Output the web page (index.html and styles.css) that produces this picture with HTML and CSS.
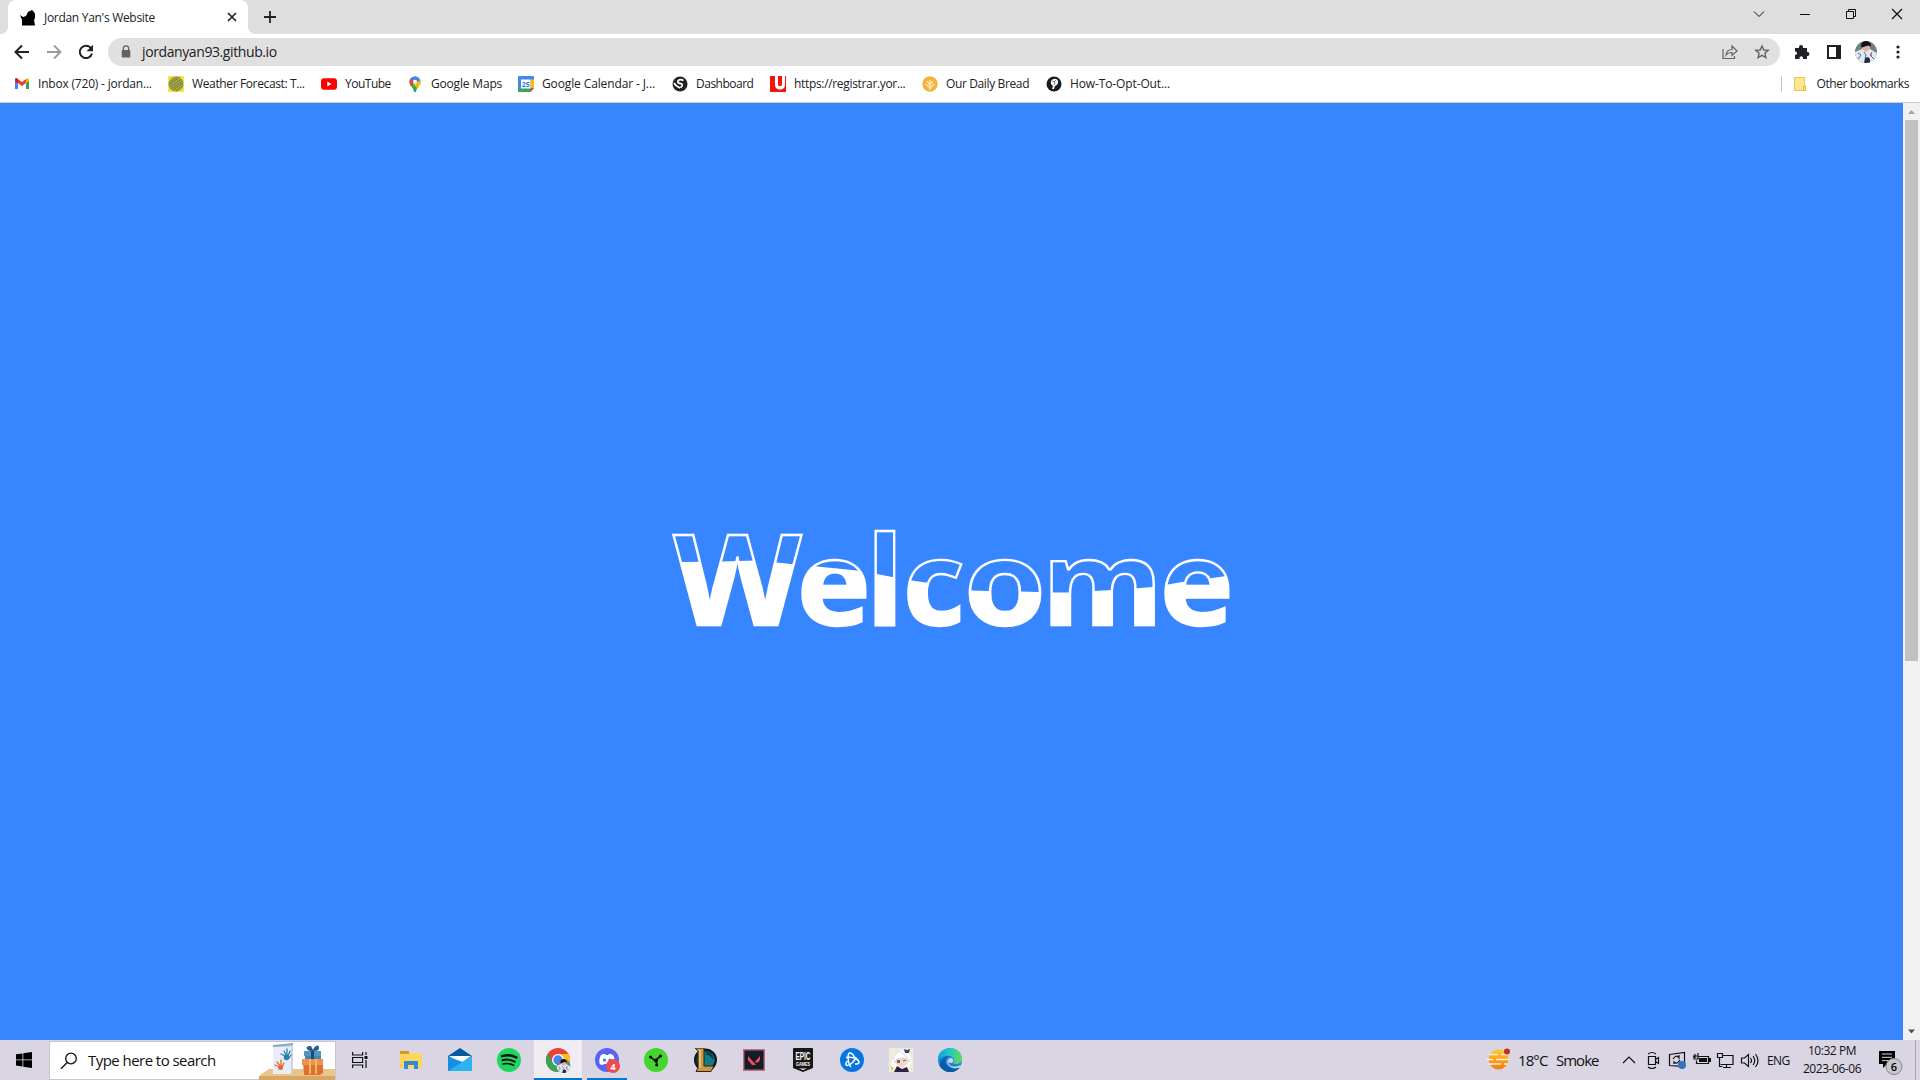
FILE: index.html
```html
<!DOCTYPE html>
<html lang="en">
<head>
<meta charset="utf-8">
<title>Jordan Yan's Website</title>
<link rel="stylesheet" href="styles.css">
</head>
<body>
<header class="browser">
  <div class="tabstrip">
    <div class="tab">
      <svg class="favicon" width="16" height="16" viewBox="0 0 16 16"><path d="M2 15.500V10L0 5l3 2 3-1 2-4 4-2 2 2 1 2v4l-1 2 1 5.500z"/></svg>
      <span class="tab-title">Jordan Yan's Website</span>
      <svg class="tab-close" width="10" height="10" viewBox="0 0 10 10"><path d="M1 1l8 8M9 1l-8 8" stroke="#222" stroke-width="1.700"/></svg>
    </div>
    <svg class="new-tab" width="12" height="12" viewBox="0 0 12 12"><path d="M6 0v12M0 6h12" stroke="#222" stroke-width="1.800"/></svg>
    <div class="window-controls">
      <svg width="46" height="28" viewBox="0 0 46 28"><path d="M18 11.500l5 5 5-5"/></svg>
      <svg width="46" height="28" viewBox="0 0 46 28"><path d="M18 14.500h10"/></svg>
      <svg width="46" height="28" viewBox="0 0 46 28"><path d="M18.500 11.500h7v7h-7zM20.500 11.500v-2h7v7h-2"/></svg>
      <svg width="46" height="28" viewBox="0 0 46 28"><path d="M18 9l10 10M28 9L18 19" stroke-width="1.300"/></svg>
    </div>
  </div>
  <div class="toolbar">
    <div class="nav">
      <svg width="16" height="16" viewBox="0 0 16 16"><path d="M15 8H2M8 1.500L1.500 8 8 14.500" fill="none" stroke="#202124" stroke-width="2"/></svg>
      <svg width="16" height="16" viewBox="0 0 16 16"><path d="M1 8h13M8 1.500L14.500 8 8 14.500" fill="none" stroke="#9a9a9b" stroke-width="1.800"/></svg>
      <svg width="16" height="16" viewBox="0 0 16 16"><path d="M13 4.200A6.200 6.200 0 1 0 14 9.500" fill="none" stroke="#202124" stroke-width="2"/><path d="M15 .8v6.400H8.600z" fill="#202124"/></svg>
    </div>
    <div class="omnibox">
      <svg width="10" height="14" viewBox="0 0 10 14"><path d="M2.300 6V3.500a2.700 2.700 0 0 1 5.400 0V6" fill="none" stroke="#5f6368" stroke-width="1.300"/><rect x=".7" y="5" width="8.600" height="7.500" rx="1" fill="#5f6368"/></svg>
      <span class="url">jordanyan93.github.io</span>
      <svg class="share" width="16" height="16" viewBox="0 0 16 16"><path d="M1 5v9.500h11.500V12M4 11c.5-4 3-5.500 6-5.500V2l5 5-5 4.500V8.500c-3 0-4.500.5-6 2.500z" fill="none" stroke="#5f6368" stroke-width="1.200"/></svg>
      <svg width="16" height="16" viewBox="0 0 16 16"><path d="M8 2l1.800 4 4.400.4-3.300 2.900 1 4.300L8 11.300l-3.900 2.300 1-4.300L1.800 6.400 6.200 6z" fill="none" stroke="#5f6368" stroke-width="1.400"/></svg>
    </div>
    <div class="actions">
      <svg width="16" height="16" viewBox="0 0 16 16"><path d="M1 4h4V3a2 2 0 0 1 4 0v1h4v4h.5a2 2 0 0 1 0 4H13v3H9v-1a1.700 1.700 0 0 0-3.500 0v1H1v-4h.6a1.800 1.800 0 0 0 0-3.500H1z" fill="#202124"/></svg>
      <svg width="16" height="16" viewBox="0 0 16 16"><path d="M1 1h14v14H1zM3 3v10h7V3z" fill="#202124" fill-rule="evenodd"/></svg>
      <svg class="avatar" width="22" height="22" viewBox="0 0 22 22"><use href="#person"/></svg>
      <svg width="16" height="16" viewBox="0 0 16 16" fill="#202124"><circle cx="8" cy="3" r="1.600"/><circle cx="8" cy="8" r="1.600"/><circle cx="8" cy="13" r="1.600"/></svg>
    </div>
  </div>
  <nav class="bookmarks">
    <div class="bm w1"><svg width="16" height="16" viewBox="0 0 16 16"><path d="M1 3.500V13h3V7z" fill="#4285f4"/><path d="M12 7v6h3V3.500z" fill="#34a853"/><path d="M1 3.500C1 2 3 1.800 4 3l4 3 4-3v4l-4 3-7-5z" fill="#ea4335"/><path d="M12 3c1-1.200 3-1 3 .5V5l-3 2.500z" fill="#fbbc04"/><path d="M1 3.500V5l3 2.500V3C3 1.800 1 2 1 3.500z" fill="#c5221f"/></svg><span>Inbox (720) - jordan...</span></div>
    <div class="bm w2"><svg width="16" height="16" viewBox="0 0 16 16"><rect width="16" height="16" rx="1" fill="#f2e14b"/><circle cx="8" cy="8" r="7.500" fill="#a9a940"/><path d="M1 7l8-6M1 9l11-8M2 11L14 3M3 13L15 5M5 14l10-7M8 15l7-5" stroke="#586d47" stroke-width=".9" stroke-dasharray="1.500 .6"/></svg><span>Weather Forecast: T...</span></div>
    <div class="bm w3"><svg width="16" height="16" viewBox="0 0 16 16"><rect y="2.200" width="16" height="11.600" rx="3" fill="#f00"/><path d="M6.300 5.500v5L10.500 8z" fill="#fff"/></svg><span>YouTube</span></div>
    <div class="bm w4"><svg width="16" height="16" viewBox="0 0 16 16"><path d="M2.500 6a5.500 5.500 0 0 1 11 0c0 4-4 5-4.500 10H7C6.500 11 2.500 10 2.500 6z" fill="#34a853"/><path d="M8 6l5.300-1.500C14.500 8 12 10 10 12L6 8z" fill="#fbbc04"/><path d="M2.500 6c0-1 .3-2.500 1.300-3.700L8 6l-4.200 4.200C3 9 2.500 7.500 2.500 6z" fill="#ea4335"/><path d="M3.800 2.300A5.500 5.500 0 0 1 13 4L8 8z" fill="#4285f4"/><circle cx="8" cy="5.800" r="2" fill="#fff"/></svg><span>Google Maps</span></div>
    <div class="bm w5"><svg width="16" height="16" viewBox="0 0 16 16"><path d="M0 1Q0 0 1 0h14q1 0 1 1v11l-4 4H1q-1 0-1-1z" fill="#4285f4"/><path d="M12.500 3.500H16V12h-3.500z" fill="#fbbc04"/><path d="M0 12.500h12.500V16H1q-1 0-1-1z" fill="#34a853"/><path d="M12.500 12.500H16L12.500 16z" fill="#ea4335"/><path d="M3 3.500h9.500v9H3z" fill="#fff"/><text x="7.700" y="11" class="cal-day">25</text></svg><span>Google Calendar - J...</span></div>
    <div class="bm w6"><svg width="16" height="16" viewBox="0 0 16 16"><circle cx="8" cy="8" r="7.500" fill="#222"/><path d="M11.500 4.500C7 2 4 6 7 7.200c4 .8 4.500 1.800 1.500 4.500M2 7c1.500 3 4 3.800 6 5" fill="none" stroke="#fff" stroke-width="1.700"/></svg><span>Dashboard</span></div>
    <div class="bm w7"><svg width="16" height="16" viewBox="0 0 16 16"><path d="M0 0h16v16H0z" fill="#f4140c"/><path d="M5 0h3v8c0 3 4 3 4 0V0h3v9c0 6-10 6-10 0z" fill="#fff"/></svg><span>https://registrar.yor...</span></div>
    <div class="bm w8"><svg width="16" height="16" viewBox="0 0 16 16"><circle cx="8" cy="8" r="7.700" fill="#f7b13c"/><path d="M8 14V4M8 9L5 5M8 9l3-4M8 12L3.500 8M8 12l4.500-4" fill="none" stroke="#ffe9bd" stroke-width="1.300"/></svg><span>Our Daily Bread</span></div>
    <div class="bm w9"><svg width="16" height="16" viewBox="0 0 16 16"><circle cx="8" cy="8" r="7.500" fill="#171b1d"/><path d="M5 5c2-3 6-3 7 0 .5 3-1 4-3 5l-1 3H6l1-3C5 9 4.500 7 5 5z" fill="#fff"/><path d="M6 5l3 1-1 3M8 6l2-2" stroke="#444" stroke-width=".7" fill="none"/></svg><span>How-To-Opt-Out...</span></div>
    <div class="other"><svg width="14" height="16" viewBox="0 0 14 16"><path d="M1.500 1.500h10V10h1.200v4.500H1.500z" fill="#ffe694" stroke="#ebc744"/><path d="M10.500 14.500v-4h2v4z" fill="#ffe694" stroke="#e5bd2b"/></svg><span>Other bookmarks</span></div>
  </nav>
</header>

<main class="viewport">
  <section class="hero">
    <svg class="welcome" width="580" height="130" viewBox="660 510 580 130">
      <defs>
        <pattern id="wave" patternUnits="userSpaceOnUse" x="660" y="500" width="600" height="150" viewBox="660 500 600 150"><path d="M660 562.500L682 562l41-.5 33-1 20.500 2L791 564l26 2.500 40 4 20 3.500 17.500 3.500L912 580.500l17 2.500 42.500 7.500 16.500.5 33 .5 32 1h17.500L1094 591l18-1 23-1.500 17-1.500 16-2.500 17-3 24-3 14-2 17-2.500h20V650H660z" fill="#fff"/></pattern>
      </defs>
      <text class="word" y="625"><tspan class="cap" x="673.500" textLength="128" lengthAdjust="spacingAndGlyphs">W</tspan><tspan x="797" textLength="73.500" lengthAdjust="spacingAndGlyphs">e</tspan><tspan class="tall" x="866">l</tspan><tspan x="903" textLength="62" lengthAdjust="spacingAndGlyphs">c</tspan><tspan x="964" textLength="82" lengthAdjust="spacingAndGlyphs">o</tspan><tspan x="1042" textLength="121" lengthAdjust="spacingAndGlyphs">m</tspan><tspan x="1160" textLength="73.500" lengthAdjust="spacingAndGlyphs">e</tspan></text>
    </svg>
  </section>
  <div class="scrollbar">
    <svg width="17" height="17" viewBox="0 0 17 17"><path d="M5 11l3.500-4 3.500 4z" fill="#a3a3a3"/></svg>
    <div class="thumb"></div>
    <svg class="down" width="17" height="17" viewBox="0 0 17 17"><path d="M5 6.500h7l-3.500 4z" fill="#505050"/></svg>
  </div>
</main>

<footer class="taskbar">
  <div class="start"><svg width="16" height="16" viewBox="0 0 16 16"><path d="M0 2.300l6.500-.9v6.100H0zM7.300 1.300L16 0v7.500H7.300zM0 8.300h6.500v6.100L0 13.600zM7.300 8.300H16V16l-8.700-1.300z"/></svg></div>
  <div class="search">
    <svg width="18" height="18" viewBox="0 0 18 18"><circle cx="11" cy="6.500" r="5.300" fill="none" stroke="#111" stroke-width="1.300"/><path d="M7.200 10.500L1 16.700" stroke="#111" stroke-width="1.400"/></svg>
    <span>Type here to search</span>
    <svg class="gifts" width="76" height="38" viewBox="0 0 76 38">
      <path d="M0 34l10-7h66v7z" fill="#e8c58b"/><path d="M0 34h76v4H0z" fill="#d9a663"/>
      <path d="M14 4l20-2v29H14z" fill="#c9d3e5"/><path d="M14 5h18v27H14z" fill="#e8edf8"/><path d="M14 3l20-2v2l-20 2z" fill="#8ba8b8"/>
      <g fill="none" stroke-linecap="round" stroke-width="1.300"><path d="M26 14l-4-2m5 1l-2-4m3 4V7m1 7l2-5m-1 7l2-3" stroke="#2485ad"/><path d="M20 25l-4-2m5 1l-3-4m4 4v-6m1 7l2-4" stroke="#e36a31"/></g><circle cx="27.500" cy="15.500" r="2.800" fill="#2485ad"/><circle cx="21.500" cy="25.500" r="2.500" fill="#e36a31"/>
      <path d="M46 14h16v10H46z" fill="#4086ad"/><path d="M45 9h17v5H45z" fill="#5198bd"/><path d="M52 8h3v12h-3z" fill="#174d77"/><path d="M53 9c-7 0-7-6-1-5l2 4c2-5 6-6 6-2 0 3-3 3-7 3z" fill="#285f91"/>
      <path d="M44 20h20v11l-3 2H45z" fill="#db7132"/><path d="M43 17h21v6H43z" fill="#ed914c"/><path d="M50 17h2v15h-2zm6 0h2v15h-2z" fill="#f7b557"/>
    </svg>
  </div>
  <div class="apps">
    <div class="app taskview"><svg width="16" height="16" viewBox="0 0 16 16" fill="none" stroke="#111" stroke-width="1.200"><path d="M.6 0v3h10V0M.6 16v-3h10v3M.6 5.500h10v5H.6zM14 0v3M14 8v8"/><path d="M12.500 4h3v3h-3z" fill="#111" stroke="none"/></svg></div>
    <div class="app"><svg width="24" height="24" viewBox="0 0 24 24"><path d="M1 4q0-1 1-1h7l2 2h11q1 0 1 1v13q0 1-1 1H1z" fill="#ffd45f"/><path d="M1 3h9v3H1z" fill="#dc9a14"/><path d="M5 14q0-1 1-1h12q1 0 1 1v7h-4v-4H9v4H5z" fill="#318ad5"/></svg></div>
    <div class="app"><svg width="26" height="26" viewBox="0 0 26 26"><path d="M1 9l12-8 12 8v15H1z" fill="#0759a6"/><path d="M2 9h22L13 17z" fill="#fff"/><path d="M1 9.500l16 6L1 24z" fill="#168fe0"/><path d="M1 24L25 9v15z" fill="#2cb4f2"/></svg></div>
    <div class="app"><svg width="24" height="24" viewBox="0 0 24 24"><circle cx="12" cy="12" r="12" fill="#1ed760"/><g fill="none" stroke="#111" stroke-linecap="round"><path d="M5 8.200c5-1.500 10-1 14.500 1.300" stroke-width="2.400"/><path d="M5.500 12.300c4-1.200 8.500-.7 12.300 1.400" stroke-width="2"/><path d="M6 16c4-1 7.300-.5 10.500 1.300" stroke-width="1.700"/></g></svg></div>
    <div class="app active"><svg width="26" height="26" viewBox="0 0 26 26"><circle cx="13" cy="13" r="12" fill="#ea4335"/><path d="M2.500 7A12 12 0 0 0 13 25l5-9H8z" fill="#34a853"/><path d="M13 7h10.500A12 12 0 0 1 13 25l5.500-9z" fill="#fbc116"/><circle cx="13" cy="13" r="6" fill="#fff"/><circle cx="13" cy="13" r="4.700" fill="#4285f4"/><g transform="translate(11.500 12) scale(.64)"><use href="#person"/></g></svg></div>
    <div class="app running"><svg width="26" height="26" viewBox="0 0 26 26"><circle cx="13" cy="13" r="12" fill="#5865f2"/><path d="M7 8c2-1.500 4-1 4-1l1 1h2l1-1s2-.5 4 1c2 3 2 8 1 9-2 2-4 0-4 0h-6s-2 2-4 0c-1-1-1-6 1-9z" fill="#fff"/><circle cx="10.500" cy="13" r="1.600" fill="#5865f2"/><circle cx="16" cy="13" r="1.600" fill="#5865f2"/><circle cx="19" cy="19" r="7" fill="#ee4a4f"/><text x="19" y="22.500" class="count">4</text></svg></div>
    <div class="app"><svg width="24" height="24" viewBox="0 0 24 24"><circle cx="12" cy="12" r="12" fill="#44d62c"/><path d="M11.500 13L6 8.500M11.500 12.500l5.500-5M12 12l1 5" stroke="#132b14" stroke-width="1.800"/><circle cx="6.500" cy="9" r="1.500"/><circle cx="16.500" cy="8" r="1.500"/><circle cx="12.700" cy="17" r="1.500"/><circle cx="12" cy="12.500" r="2"/></svg></div>
    <div class="app"><svg width="24" height="24" viewBox="0 0 24 24"><circle cx="12.500" cy="12" r="10.500" fill="#0c303a" stroke="#111a20" stroke-width="2"/><circle cx="13" cy="12" r="8.500" fill="#117d87"/><path d="M13 4c5 0 8 4 7 8-2-4-4-5-7-5z" fill="#093c47"/><path d="M2 0h9v18h10l-3 5.500H3L5 20V3z" fill="#c79743" stroke="#30240f"/><path d="M7 2v18" stroke="#edcc76" stroke-width="1.500"/></svg></div>
    <div class="app"><svg width="22" height="22" viewBox="0 0 22 22"><path d="M.7.700h20.600v20.600H.7z" fill="#111e29" stroke="#c66c7b" stroke-width="1.400"/><path d="M5 7l8 9H9l-4-5zM17 7v4l-2 2.500h-3.500z" fill="#ff4655"/></svg></div>
    <div class="app"><svg class="epic-logo" width="22" height="24" viewBox="0 0 22 24"><path d="M1 1q0-1 1-1h18q1 0 1 1v19l-10 4-10-4z" fill="#171717"/><text x="11" y="11.500" class="epic" textLength="15" lengthAdjust="spacingAndGlyphs">EPIC</text><text x="11" y="17.500" class="games" textLength="14" lengthAdjust="spacingAndGlyphs">GAMES</text><path d="M7 20.500h8l-4 1.500z" fill="#fff"/></svg></div>
    <div class="app"><svg width="24" height="24" viewBox="0 0 24 24"><circle cx="12" cy="12" r="12" fill="#0875e1"/><g fill="none" stroke="#fff" stroke-width="1.500"><path d="M6 9.500c6-1 12 1 13 4.500.5 2-2 2-4 2"/><path d="M11 19C8 16 7 6 9.500 5c2-.5 4 2 5 4"/><path d="M16 9c-1 4-5 8-9 8.500-2 0-1-3 .5-4.500"/></g></svg></div>
    <div class="app"><svg width="24" height="24" viewBox="0 0 24 24"><path d="M0 0h24v24H0z" fill="#f2ead9"/><path d="M4 8l7-6 9 2 3 9-4 8H6L2 17z" fill="#fffdfa"/><path d="M6 10l12-1 1 6-6 5-6-4z" fill="#f8d5c5"/><path d="M4 10l6-7 6 4 5 7-6-4-7 1-2 4z" fill="#fff" stroke="#c9c4cc" stroke-width=".7"/><path d="M8 12h3v3H8z" fill="#66688e"/><path d="M14 13l3-1" stroke="#765"/><path d="M5 24l3-6 5 3 5-2 2 5z" fill="#29233f"/><path d="M15 1l3 1 3-1-1 4h-4z" fill="#344779"/><path d="M1 18l4 2-2 3z" fill="#e7c956"/></svg></div>
    <div class="app"><svg width="24" height="24" viewBox="0 0 24 24"><defs><linearGradient id="edge-top" x2="1"><stop stop-color="#0aa7df"/><stop offset=".5" stop-color="#29c7c5"/><stop offset="1" stop-color="#64dd4c"/></linearGradient></defs><circle cx="12" cy="12" r="12" fill="#1688d8"/><path d="M0 10C2-3 23-4 24 11c0 5-7 6-9 4 2-2 1-6-3-7-5-1-10 0-12 5z" fill="url(#edge-top)"/><path d="M12 8c-4 1-6 4-4 8 3 5 9 6 14 3-6 9-17 5-20-1-1-5 4-10 10-10z" fill="#0c59a4"/><path d="M11 11c-2 3 0 7 4 7.500 3 .5 6-.5 8-1.500l-1.500 2.500c-5 2-9 0-11-2.500-2-2-1.500-5 .5-6z" fill="#dad5e2"/><circle cx="12.700" cy="12.500" r="2.500" fill="#dad5e2"/></svg></div>
  </div>
  <div class="weather">
    <svg width="24" height="22" viewBox="0 0 24 22"><defs><linearGradient id="sun" y2="1" x2="0"><stop stop-color="#ffc928"/><stop offset="1" stop-color="#f47b1a"/></linearGradient></defs><circle cx="12.500" cy="11.500" r="10" fill="url(#sun)"/><path d="M3 6.500h9m3 0h6M0 11.500h7m3 0h13M3 16h12m3 0h4" stroke="#fff0d2" stroke-width="1.400"/><circle cx="21" cy="3.500" r="3" fill="#c42b1c"/></svg>
    <span class="temp">18°C</span><span class="sky">Smoke</span>
  </div>
  <div class="tray">
    <svg width="24" height="18" viewBox="0 0 24 18"><path d="M6 12l6-6 6 6"/></svg>
    <svg width="24" height="18" viewBox="0 0 24 18"><path d="M7.500 5.500h7v8h-7zM14.500 8.500l3-2v6l-3-2M7 3q4-3 8 0M7 16q4 3 8 0"/></svg>
    <svg width="24" height="18" viewBox="0 0 24 18"><path d="M4.500 3.500l15-2v14l-15-1zM8 8q3-5 6-1V4M15 9q-3 5-6 2v2"/><circle cx="17" cy="14" r="4" fill="#2f74c0" stroke="none"/></svg>
    <svg width="24" height="18" viewBox="0 0 24 18"><path d="M8.500 5.500h11v7h-12v-3M6 3v4M9 2v3M4 5h5v3H5V5"/><path d="M10 7h8v4h-8zM20 7h2v4h-2z" fill="#111" stroke="none"/></svg>
    <svg width="24" height="18" viewBox="0 0 24 18"><path d="M9 4.500h11v9H7.500M13.500 13.500v3M10 16.500h8M4.500 2.500h5v4h-5zM6.500 6.500v9h3"/></svg>
    <svg width="24" height="18" viewBox="0 0 24 18"><path d="M4.500 7v5h3l4 3.500V3.500L7.500 7zM13.500 7q2 2.500 0 5M16 5q3.500 4.500 0 9M18.500 3q5 6.500 0 13"/></svg>
  </div>
  <span class="lang">ENG</span>
  <div class="clock"><span class="time">10:32 PM</span><span class="date">2023-06-06</span></div>
  <div class="notice"><svg width="28" height="28" viewBox="0 0 28 28"><path d="M1 2h16v13H9l-4 4v-4H1z"/><path d="M4 5h10M4 8.300h10M4 11.600h7" stroke="#dad5e2"/><circle cx="16" cy="17.500" r="8" fill="#c9c6cd" stroke="#87848b"/><text x="16" y="21.500" class="notice-count">6</text></svg></div>
  <div class="show-desktop"></div>
</footer>

<svg class="symbols" width="0" height="0" aria-hidden="true"><defs>
  <clipPath id="round"><circle cx="11" cy="11" r="11"/></clipPath>
  <g id="person" clip-path="url(#round)"><path d="M0 0h22v22H0z" fill="#6f7f80"/><path d="M0 11l7-3h8l7 4v10H0z" fill="#e3e9f2"/><path d="M7 4h8v4l-4 3-4-3z" fill="#dfb29d"/><path d="M6 5.500q0-5.500 5-5.500t5 5.500l-3-1-6 2z" fill="#111"/><path d="M10 17l3-1 2 2v4H9z" fill="#272b3b"/><path d="M3 12l3 2-3 4M9 11l2 3-1 3M17 11l-2 3 4 4" stroke="#536899" fill="none"/><path d="M15 13h2v2h-2z" fill="#d96172"/></g>
</defs></svg>
</body>
</html>
```
FILE: styles.css
```css
* { box-sizing: border-box; }
body {
  margin: 0;
  width: 1920px;
  height: 1080px;
  overflow: hidden;
  display: flex;
  flex-direction: column;
  font-family: "Open Sans", "Noto Sans", sans-serif;
  font-size: 12px;
  color: #202124;
}
svg { display: block; flex: none; }
span { white-space: nowrap; }
.symbols { position: absolute; }

.browser { height: 103px; flex: none; background: #fff; border-bottom: 1px solid #cdcdcd; }
.tabstrip { height: 34px; background: #dedede; display: flex; align-items: flex-start; padding-left: 8px; }
.tab { width: 240px; height: 34px; background: #fff; border-radius: 8px 8px 0 0; display: flex; align-items: center; padding: 0 11px 0 12px; position: relative; }
.tab::before, .tab::after { content: ""; position: absolute; bottom: 0; width: 8px; height: 8px; }
.tab::before { left: -8px; background: radial-gradient(circle at 0 0, #dedede 8px, #fff 8.500px); }
.tab::after { right: -8px; background: radial-gradient(circle at 100% 0, #dedede 8px, #fff 8.500px); }
.favicon { margin-top: 2px; }
.tab-title { margin-left: 8px; letter-spacing: -0.300px; }
.tab-close { margin-left: auto; }
.new-tab { margin: 11px 0 0 16px; }
.window-controls { display: flex; margin-left: auto; }
.window-controls svg { fill: none; stroke: #111; stroke-width: 1; }

.toolbar { height: 36px; display: flex; align-items: center; }
.nav { width: 108px; display: flex; gap: 16px; padding-left: 14px; }
.omnibox { width: 1672px; height: 28px; border-radius: 14px; background: #e0e0e0; display: flex; align-items: center; padding: 0 10px 0 13px; }
.url { margin-left: 11px; font-size: 14px; padding-bottom: 1px; letter-spacing: -0.400px; }
.share { margin: 0 16px 0 auto; }
.actions { display: flex; align-items: center; gap: 16px; margin-left: 14px; }
.avatar { margin: 0 -3px 0 -3px; }

.bookmarks { height: 28px; display: flex; align-items: center; gap: 16px; padding: 0 11px 0 14px; }
.bm { display: flex; align-items: center; gap: 8px; height: 16px; }
.bm span, .other span { padding-bottom: 1px; }
.w1 { width: 138px; letter-spacing: -0.200px; }
.w2 { width: 137px; letter-spacing: -0.370px; }
.w3 { width: 70px; letter-spacing: -0.500px; }
.w4 { width: 95px; letter-spacing: -0.180px; }
.w5 { width: 138px; letter-spacing: -0.120px; }
.w6 { width: 82px; letter-spacing: -0.500px; }
.w7 { width: 136px; letter-spacing: -0.330px; }
.w8 { width: 108px; letter-spacing: -0.370px; }
.w9 { width: 124px; letter-spacing: -0.120px; }
.cal-day { font: bold 7px "Open Sans", sans-serif; letter-spacing: 0; text-anchor: middle; fill: #3275da; }
.other { height: 16px; margin-left: auto; display: flex; align-items: center; gap: 9px; border-left: 1px solid #c4c4c4; padding-left: 11px; letter-spacing: -0.400px; }

.viewport { height: 937px; flex: none; display: flex; }
.hero { width: 1903px; background: #3786ff; display: flex; align-items: center; justify-content: center; }
.welcome { margin: 7px 0 0 -3px; overflow: visible; }
.word { font-family: "Open Sans", sans-serif; font-weight: 700; font-size: 117px; fill: url(#wave); stroke: #fff; stroke-width: 2.300px; }
.cap { font-size: 126px; }
.tall { font-size: 124px; }
.scrollbar { width: 17px; background: #f1f1f1; display: flex; flex-direction: column; }
.thumb { height: 541px; background: #c1c1c1; margin: 0 2px; }
.down { margin-top: auto; }

.taskbar { height: 40px; flex: none; background: #dad5e2; display: flex; color: #111; }
.start { width: 49px; display: flex; align-items: center; padding-left: 16px; }
.search { width: 287px; height: 39px; margin-top: 1px; background: #fff; border: 1px solid #c8c6cb; display: flex; align-items: center; padding-left: 10px; font-size: 15px; }
.search span { margin-left: 10px; padding-bottom: 1px; letter-spacing: -0.550px; }
.gifts { margin-left: auto; }
.apps { display: flex; gap: 1px; }
.app { width: 48px; height: 40px; display: flex; align-items: center; justify-content: center; }
.taskview { margin-right: 2px; }
.active { background: #efedf3; border-bottom: 2px solid #0078d7; padding-top: 2px; }
.running { width: 40px; margin: 0 4px; border-bottom: 2px solid #0078d7; padding-top: 2px; }
.count { font: bold 9px "Open Sans", sans-serif; fill: #fff; text-anchor: middle; }
.epic-logo { overflow: visible; }
.epic { font: bold 11px "Liberation Sans", sans-serif; fill: #fff; text-anchor: middle; }
.games { font: bold 5px "Liberation Sans", sans-serif; fill: #fff; text-anchor: middle; }
.weather { display: flex; align-items: center; margin-left: 512px; font-size: 15px; }
.weather svg { margin-top: -3px; }
.temp { margin-left: 8px; width: 38px; letter-spacing: -0.900px; }
.sky { width: 42px; letter-spacing: -1px; }
.tray { display: flex; align-items: center; margin-left: 19px; }
.tray svg { fill: none; stroke: #111; stroke-width: 1.200; }
.lang { align-self: center; margin-left: 6px; width: 23px; letter-spacing: -0.600px; }
.clock { width: 60px; margin-left: 12px; display: flex; flex-direction: column; align-items: center; line-height: 18px; padding-top: 2px; letter-spacing: -0.450px; }
.notice { margin-left: 16px; padding-top: 9px; }
.notice-count { font: 600 11px "Open Sans", sans-serif; text-anchor: middle; }
.show-desktop { margin-left: auto; width: 5px; border-left: 1px solid #aaa6b1; }
```
